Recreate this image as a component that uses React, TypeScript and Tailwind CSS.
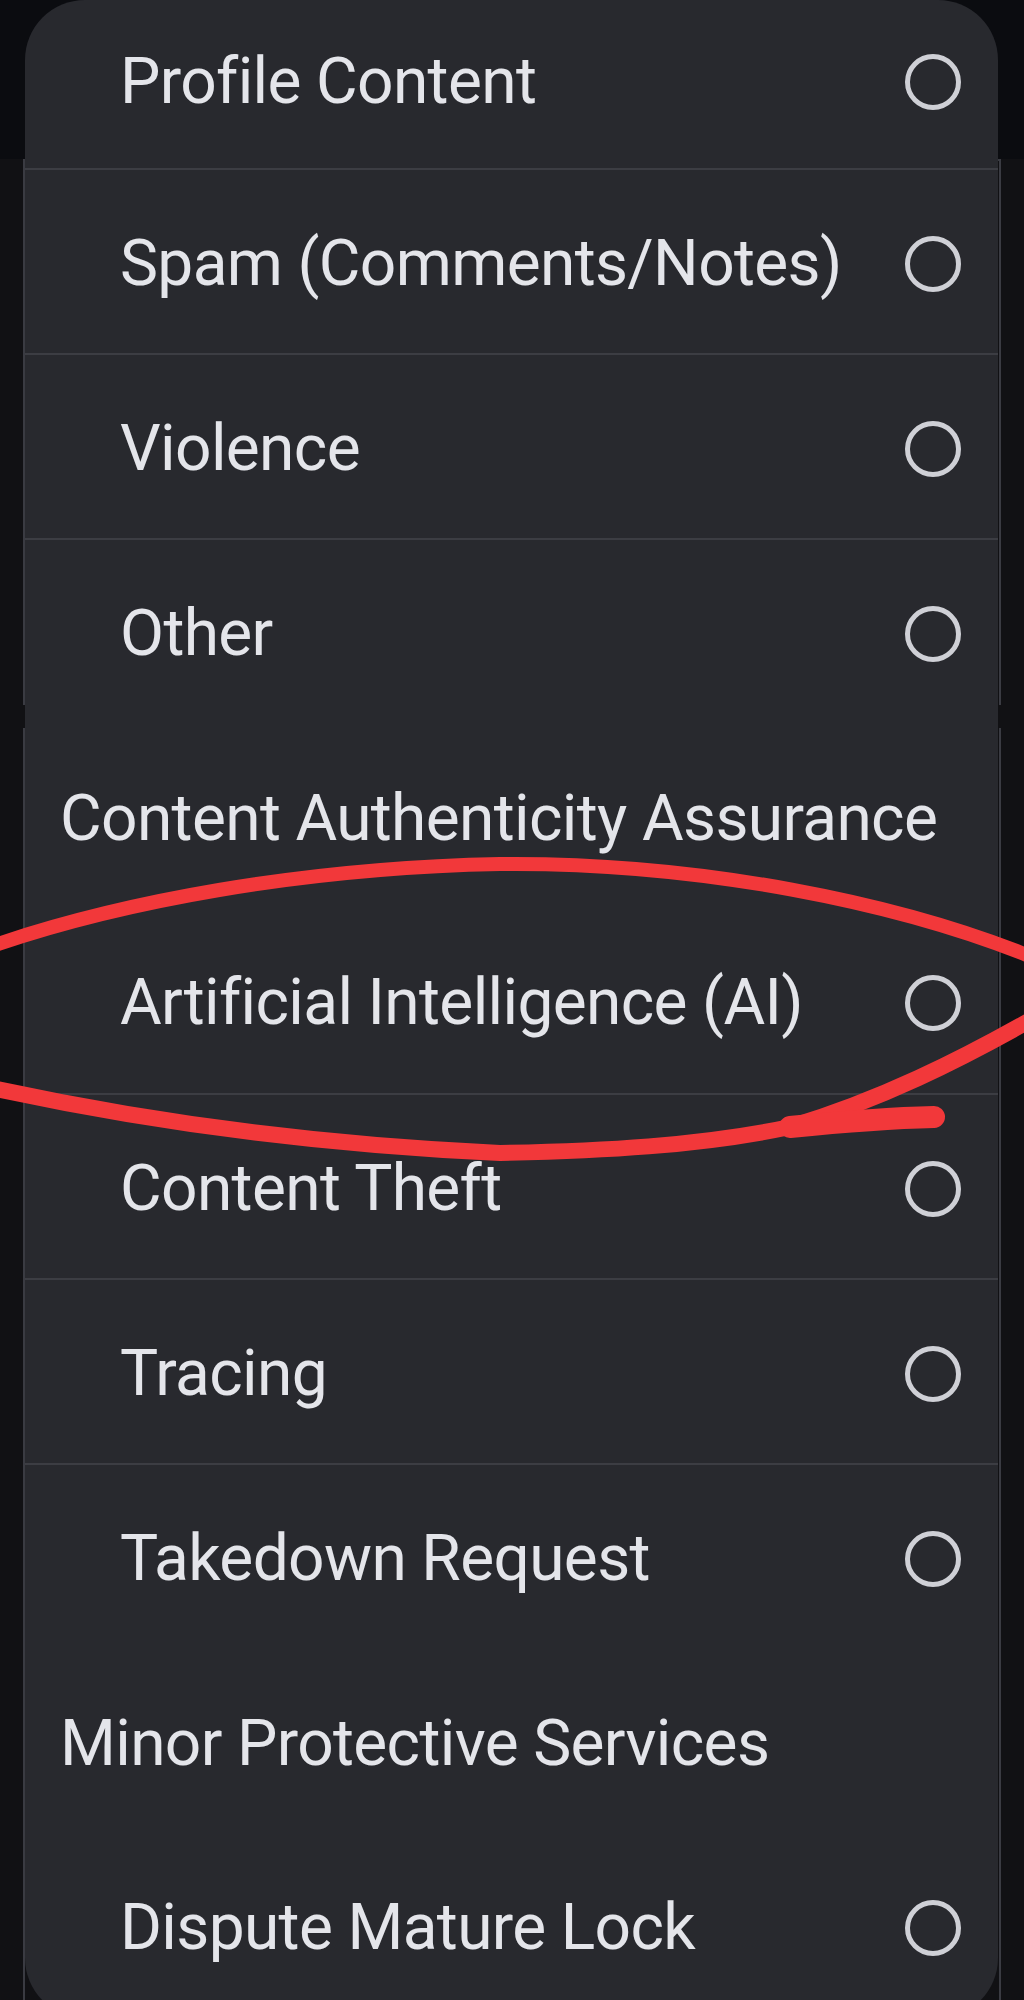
import React from 'react';

type Row =
  | { kind: 'item'; label: string; h: string; divider?: boolean }
  | { kind: 'header'; label: string; h: string };

const rows: Row[] = [
  { kind: 'item', label: 'Profile Content', h: 'h-[168px] pb-[8px]' },
  { kind: 'item', label: 'Spam (Comments/Notes)', h: 'h-[185px]', divider: true },
  { kind: 'item', label: 'Violence', h: 'h-[185px]', divider: true },
  { kind: 'item', label: 'Other', h: 'h-[185px]', divider: true },
  { kind: 'header', label: 'Content Authenticity Assurance', h: 'h-[185px]' },
  { kind: 'item', label: 'Artificial Intelligence (AI)', h: 'h-[185px]' },
  { kind: 'item', label: 'Content Theft', h: 'h-[185px]', divider: true },
  { kind: 'item', label: 'Tracing', h: 'h-[185px]', divider: true },
  { kind: 'item', label: 'Takedown Request', h: 'h-[185px]', divider: true },
  { kind: 'header', label: 'Minor Protective Services', h: 'h-[185px]' },
  { kind: 'item', label: 'Dispute Mature Lock', h: 'h-[185px]' },
];

function Radio() {
  return <div className="w-[56px] h-[56px] rounded-full border-[5px] border-[#cfd0d6] shrink-0" />;
}

// hand-drawn red circle around the AI option
function Annotation() {
  return (
    <svg
      className="absolute inset-0 pointer-events-none"
      width="1024"
      height="2000"
      viewBox="0 0 1024 2000"
      fill="none"
    >
      <g stroke="#f2383a" strokeLinecap="round" strokeLinejoin="round">
        <path d="M -8 946 C 120 902, 300 868, 500 864 C 700 862, 900 903, 1034 958" strokeWidth="14" />
        <path d="M 1034 1018 C 960 1060, 880 1100, 790 1127 C 700 1146, 600 1151, 500 1153 C 300 1144, 130 1118, -8 1088" strokeWidth="16" />
        <path d="M 790 1127 C 840 1122, 890 1118, 934 1117" strokeWidth="22" />
      </g>
    </svg>
  );
}

export default function App() {
  return (
    <div
      className="relative w-[1024px] h-[2000px] overflow-hidden bg-[#111114]"
      style={{ fontFamily: 'Roboto, "Noto Sans", sans-serif' }}
    >
      {/* page behind the sheet */}
      <div className="flex flex-col h-full">
        <div className="h-[159px] bg-[#0b0c10]" />
        <div className="mx-[23px] h-[546px] border-x-2 border-t-2 border-[#3a3b42]" />
        <div className="h-[23px]" />
        <div className="mx-[23px] flex-1 border-x-2 border-[#3a3b42]" />
      </div>

      {/* sheet */}
      <div className="absolute left-[25px] top-0 w-[973px] h-[2018px] rounded-[60px] bg-[#28292e] overflow-hidden text-[#e4e5ea] text-[64px] tracking-[-0.01em] leading-none">
        {rows.map((r, i) =>
          r.kind === 'header' ? (
            <div key={i} className={`${r.h} flex items-center pl-[35px] pt-[6px]`}>
              {r.label}
            </div>
          ) : (
            <div
              key={i}
              className={`${r.h} flex items-center justify-between pl-[95px] pr-[37px] pt-[4px] ${
                r.divider ? 'border-t-2 border-[#3c3d43]' : ''
              }`}
            >
              <span>{r.label}</span>
              <Radio />
            </div>
          )
        )}
      </div>

      <Annotation />
    </div>
  );
}
